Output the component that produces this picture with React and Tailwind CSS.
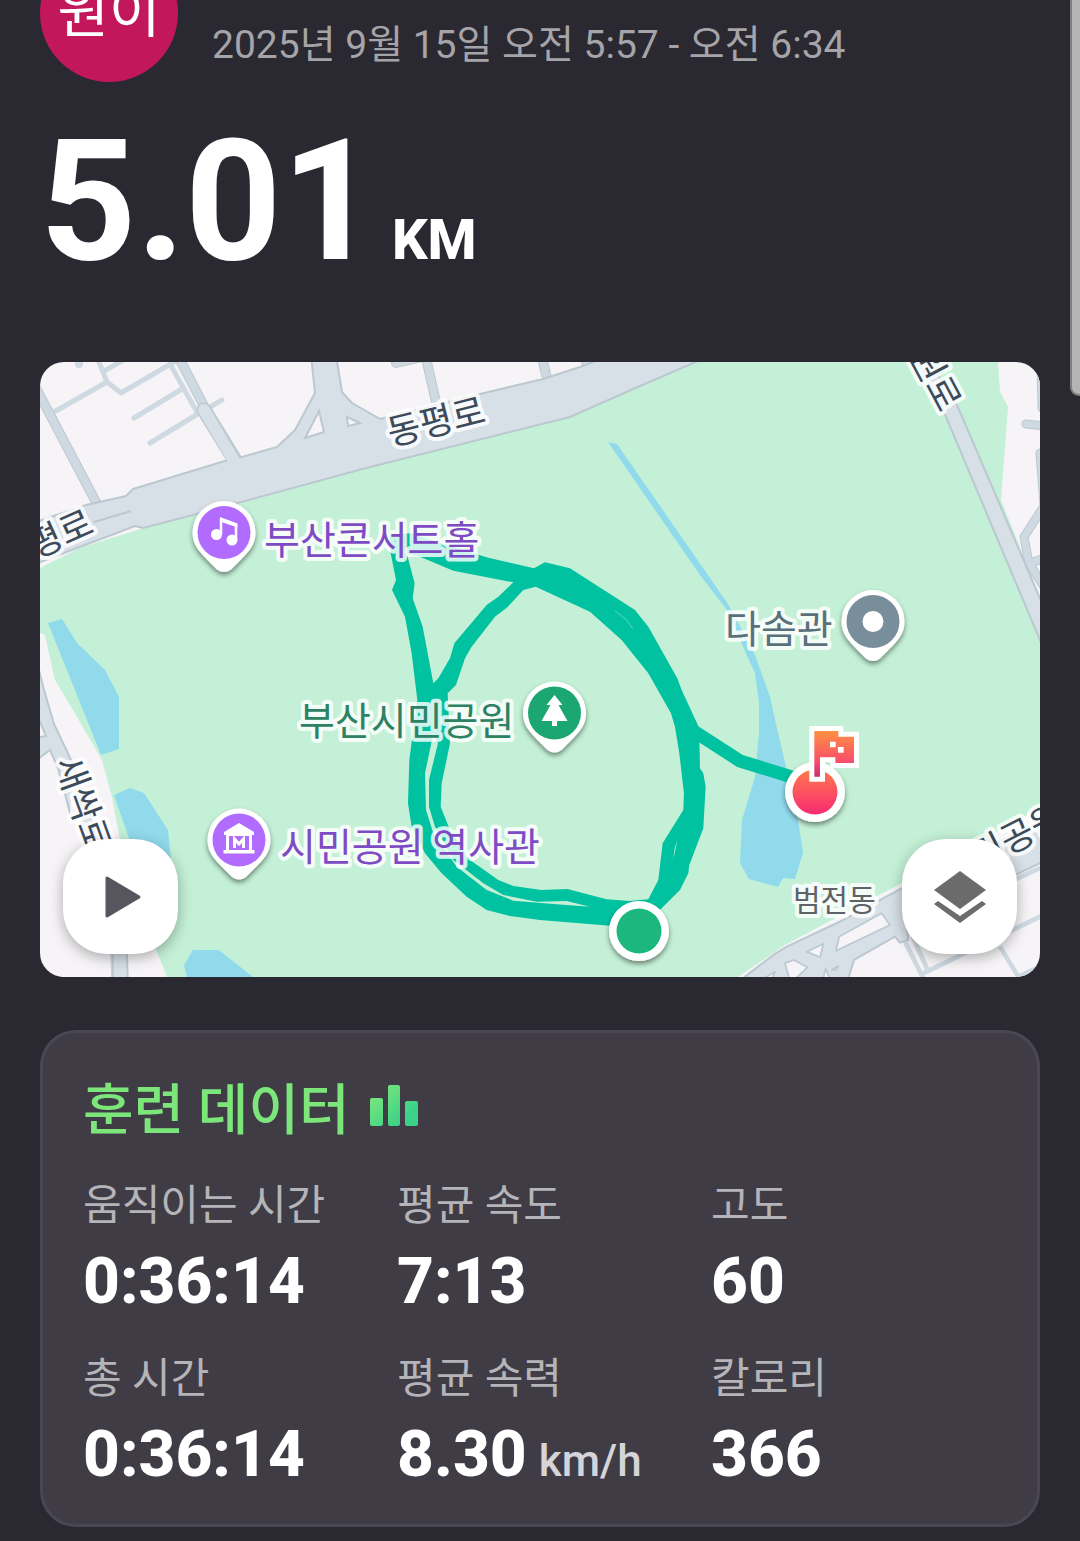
import { useState } from 'react';

const stats = [
  { label: '움직이는 시간', value: '0:36:14' },
  { label: '평균 속도', value: '7:13' },
  { label: '고도', value: '60' },
  { label: '총 시간', value: '0:36:14' },
  { label: '평균 속력', value: '8.30', unit: 'km/h' },
  { label: '칼로리', value: '366' },
];

const HALO = '[paint-order:stroke] stroke-white/80 stroke-[8px] [stroke-linejoin:round]';

function Pin({ x, y, color, children }) {
  return (
    <g transform={`translate(${x} ${y})`}>
      <path
        d="M-31.5 0A31.5 31.5 0 1 1 31.5 0C31.5 12 25 19 17 27L7 37Q0 42-7 37L-17 27C-25 19-31.5 12-31.5 0Z"
        fill="#fff"
        filter="url(#pin-shadow)"
      />
      <circle r="26.5" fill={color} />
      {children}
    </g>
  );
}

function Roads() {
  return (
    <g>
      {/* side streets, upper left */}
      <g fill="none" stroke="#ced9e1" strokeWidth="5" strokeLinecap="round" strokeLinejoin="round">
        <path d="M54 412L107 382M99 362L107 382L121 393L174 362M104 371L122 361M134 418L182 389M170 364L198 414L222 400M150 443L196 415" />
      </g>
      <g fill="none" stroke="#bcc8d0" strokeWidth="10">
        <path d="M36 388L97 504M178 356L204 406M426 358L436 402M542 358L548 382M585 358L589 372" />
        <path d="M396 363L422 357" strokeLinecap="round" />
      </g>
      <g fill="none" stroke="#ced9e1" strokeWidth="8">
        <path d="M36 388L97 504M178 356L204 406M426 358L436 402M542 358L548 382M585 358L589 372" />
        <path d="M79 360L79 364M396 363L422 357" strokeLinecap="round" />
      </g>
      <path d="M204 410L236 462" fill="none" stroke="#bcc8d0" strokeWidth="15" strokeLinecap="round" />

      {/* main road */}
      <path
        d="M30 524L86 505L126 496L133 489L228 460L242 457L277 447L295 430L315 393L311 355L336 355L342 392L352 403L380 419L480 394L543 379L583 366L610 355L712 355L640 386L570 417L370 467L193 515L143 528L135 526L30 566Z"
        fill="#d7dfe7"
        stroke="#bcc8d0"
        strokeWidth="2"
        strokeLinejoin="round"
      />
      <path d="M204 410L236 464" fill="none" stroke="#d7dfe7" strokeWidth="12" strokeLinecap="round" />
      <path d="M94 522L131 511" stroke="#bcc8d0" strokeWidth="2" />
      <path d="M319 411L324 432L305 438ZM347 417L360 423L348 426Z" fill="#f6f4f6" stroke="#bcc8d0" strokeWidth="2" />

      {/* right side */}
      <g fill="none" strokeLinecap="round" strokeLinejoin="round">
        <path d="M1041 362L1042 408M1026 424L1046 426M1040 453L1044 506L1024 537L1029 563L1046 590M1034 562L1046 557" stroke="#bcc8d0" strokeWidth="9" />
        <path d="M1041 362L1042 408M1026 424L1046 426M1040 453L1044 506L1024 537L1029 563L1046 590M1034 562L1046 557" stroke="#ced9e1" strokeWidth="7" />
      </g>
      <path d="M925 355L957 405L1000 505L1050 622L1050 664L944 412L915 355Z" fill="#d7dfe7" stroke="#bcc8d0" strokeWidth="2" />

      {/* left side */}
      <path d="M34 650L44 690L54 724L72 762L92 820L122 977L112 977L80 850L58 768L50 750L34 762L34 738L46 736L34 708Z" fill="#d7dfe7" stroke="#bcc8d0" strokeWidth="2" />
      <path d="M72 780L108 930L112 985L60 985Z" fill="#f6f4f6" />
      <path d="M112 930L113 985L128 985L126 930Z" fill="#d7dfe7" stroke="#bcc8d0" strokeWidth="2" />

      {/* junction, lower right */}
      <g transform="translate(690 660) scale(0.3333)" strokeLinejoin="round">
        <path
          d="M165 950L250 885L290 860L460 780L635 685L1060 480L1060 605L650 800L655 840L630 848L615 830L492 900L472 965L150 965Z"
          fill="#d7dfe7"
          stroke="#bcc8d0"
          strokeWidth="6"
        />
        <path
          d="M448 830L575 760L600 795L438 872ZM350 875L400 852L390 892ZM285 910L312 900L352 922L318 955L298 955ZM222 955L255 935L245 955ZM400 955L407 925L418 955ZM425 930L445 918L440 930Z"
          fill="#f6f4f6"
          stroke="#bcc8d0"
          strokeWidth="5"
        />
        <path d="M645 845L700 955M668 830L715 935M690 945L1060 765M930 860L985 950L1060 915M960 665L1060 620" fill="none" stroke="#ced9e1" strokeWidth="14" />
      </g>
    </g>
  );
}

function Route() {
  return (
    <g fill="#00c2a0">
      <g transform="translate(370 520) scale(0.3333)">
        <path
          fillRule="evenodd"
          d="M60 45L62 100L78 180L66 210L105 290L125 400L142 540L118 720L114 850L125 920L165 1000L215 1060L290 1130L350 1170L420 1188L510 1200L720 1217L806 1230L875 1165L930 1110L955 1060L958 1035L1000 925L1007 800L1000 760L990 745L988 640L985 618L935 510L922 475L835 320L795 270L600 145L525 127L492 145L355 113L230 75L120 40Z
            M110 100L134 190L128 235L158 320L190 490L205 475L240 415L253 370L350 255L385 230L430 187L250 152L150 110Z
            M497 200L460 210L412 262L375 290L305 380L285 415L258 495L233 520L240 670L215 790L212 860L240 930L300 1020L385 1080L430 1098L515 1110L592 1107L710 1138L780 1143L835 1138L865 1080L878 970L940 870L942 820L928 700L915 620L903 580L835 460L755 360L660 275Z
            M190 640L165 760L168 870L190 940L260 1040L350 1110L430 1142L560 1153L660 1160L590 1143L500 1145L400 1125L340 1090L250 1020L195 920L177 860L177 780L204 670Z
            M922 962L914 985L910 1020L915 995Z"
        />
        <path d="M735 272L770 300L788 326" fill="none" stroke="#5fd6b8" strokeWidth="3" />
      </g>
      <path d="M692 730L740 761L795 778" fill="none" stroke="#00c2a0" strokeWidth="13" />
    </g>
  );
}

function Labels() {
  return (
    <g fontFamily="'Noto Sans CJK KR', sans-serif">
      <g className={HALO} fontSize="36" fill="#3c4a5a">
        <text transform="translate(391 446) rotate(-14)">동평로</text>
        <text transform="translate(96 532) rotate(-24)" textAnchor="end">동평로</text>
        <text transform="translate(54 762) rotate(70)">새싹로</text>
        <text transform="translate(940 414) rotate(62)" textAnchor="end">공원로</text>
        <text transform="translate(979 870) rotate(-27)">민공원로</text>
      </g>
      <g className={HALO} fontSize="39">
        <text x="264" y="554" fill="#7f4bc4">부산콘서트홀</text>
        <text x="280" y="861" fill="#7f4bc4">시민공원 역사관</text>
        <text x="299" y="735" fill="#2c8263">부산시민공원</text>
        <text x="725" y="643" fill="#5a717c">다솜관</text>
      </g>
      <text className={HALO} x="793" y="911" fontSize="30" fill="#5f6368">범전동</text>
    </g>
  );
}

function RunMap() {
  return (
    <svg viewBox="40 362 1000 615" className="block w-full" role="img" aria-label="달리기 경로">
      <defs>
        <filter id="pin-shadow" x="-30%" y="-30%" width="160%" height="160%">
          <feDropShadow dx="0" dy="3" stdDeviation="2.5" floodColor="#000" floodOpacity="0.45" />
        </filter>
        <linearGradient id="finish" x1="0" y1="0" x2="0" y2="1">
          <stop offset="0" stopColor="#ff7a4a" />
          <stop offset="1" stopColor="#f92a74" />
        </linearGradient>
        <linearGradient id="flag" x1="0" y1="0" x2="0" y2="1">
          <stop offset="0" stopColor="#ff9142" />
          <stop offset="0.65" stopColor="#f9506a" />
          <stop offset="1" stopColor="#c92d77" />
        </linearGradient>
      </defs>

      <rect x="40" y="362" width="1000" height="615" fill="#f6f4f6" />
      <path
        d="M40 568L80 548L137 530L193 515L370 467L570 417L697 362L998 362L1000 392L1008 407L1001 500L1040 597L1040 808L902 883L877 896L785 945L738 977L167 977L157 952L120 840L112 797L102 760L73 710L55 680L45 635L40 633Z"
        fill="#c3f0d6"
      />
      <g fill="#90daec">
        <path d="M608 442L617 444L728 604L755 655L770 697L778 733L797 813L803 853L795 879L783 878L778 887L749 879L740 863L742 820L755 777L759 733L759 703L755 673L748 658L727 610L700 575Z" />
        <path d="M48 623L62 619L77 643L105 670L119 697L119 749L101 755Z" />
        <path d="M114 795L130 788L144 793L168 830L171 860L140 870Z" />
        <path d="M187 977L184 965L193 950L219 950L253 977Z" />
      </g>

      <Roads />
      <Route />
      <Labels />

      <Pin x={224} y={532.5} color="#b16cff">
        <path d="M-4-15.500L13.500-9V-5L-4-11Z" fill="#fff" />
        <path d="M-3-14V2M12-8V7" stroke="#fff" strokeWidth="2.500" />
        <circle cx="-7.500" cy="2" r="5.500" fill="#fff" />
        <circle cx="8" cy="7.500" r="5.500" fill="#fff" />
      </Pin>
      <Pin x={239} y={840} color="#b16cff">
        <path d="M0-17L15-8V-5H-15V-8ZM-13-5H13V10H15.500V13.500H-15.500V10H-13Z" fill="#fff" />
        <path d="M-10-4H10V10H-10Z" fill="#b16cff" />
        <path d="M-4.500 8V-1L0 4L4.500-1V8" fill="none" stroke="#fff" strokeWidth="3" />
      </Pin>
      <Pin x={554.5} y={713} color="#1ba672">
        <path d="M0-18L8-8H4L13 8H2.500V13H-2.500V8H-13L-4-8H-8Z" fill="#fff" />
      </Pin>
      <Pin x={873} y={621.5} color="#788f9b">
        <circle r="10.500" fill="#fff" />
      </Pin>

      <circle cx="639" cy="931" r="30" fill="#fff" filter="url(#pin-shadow)" />
      <circle cx="639" cy="931" r="22.500" fill="#1bb77e" />

      <circle cx="815" cy="792" r="30" fill="#fff" filter="url(#pin-shadow)" />
      <circle cx="815" cy="792" r="22.500" fill="url(#finish)" />
      <g transform="translate(690 660) scale(0.3333)">
        <path d="M373 213H445V230H492V309H436V292H390V350H373Z" fill="#fff" stroke="#fff" strokeWidth="30" />
        <path d="M373 213H445V230H492V309H436V292H390V350H373Z" fill="url(#flag)" />
        <path d="M420 245h17v17h-17zM444 261h17v17h-17z" fill="#fff" />
      </g>
    </svg>
  );
}

function MapButton({ label, className, onClick, children }) {
  return (
    <button
      type="button"
      aria-label={label}
      onClick={onClick}
      className={`absolute bottom-[23px] flex size-[115px] items-center justify-center rounded-[44px] bg-white shadow-[0_4px_14px_rgba(0,0,0,0.3)] ${className}`}
    >
      {children}
    </button>
  );
}

export default function App() {
  const [playing, setPlaying] = useState(false);

  return (
    <div className="relative overflow-hidden bg-[#2a2831] px-10 pb-[14px] font-['Roboto','Noto_Sans_CJK_KR',sans-serif] text-white">
      <div className="absolute top-0 -right-2 h-[396px] w-[18px] rounded-b-xl border-2 border-t-0 border-[#7f7f80] bg-[#b4b4b5]" />

      <header className="-mt-14 flex items-end gap-[34px]">
        <div className="flex size-[138px] shrink-0 items-center justify-center rounded-full bg-[#c2185b] text-[56px] leading-none">
          원이
        </div>
        <p className="pb-3 text-[39px] leading-[50px] text-[#a5a4a8]">2025년 9월 15일 오전 5:57 - 오전 6:34</p>
      </header>

      <h1 className="mt-9 flex items-baseline gap-[14px] text-[168px] leading-[168px] font-bold">
        5.01
        <span className="text-[56px] leading-none font-extrabold">KM</span>
      </h1>

      <section className="relative mt-[76px] overflow-hidden rounded-3xl">
        <RunMap />
        <MapButton label="재생" className="left-[23px]" onClick={() => setPlaying(!playing)}>
          <svg viewBox="0 0 48 48" className="ml-1 size-12">
            <path d="M8 5L40 24L8 43Z" fill="#57555e" stroke="#57555e" strokeWidth="3" strokeLinejoin="round" />
          </svg>
        </MapButton>
        <MapButton label="지도 레이어" className="right-[23px]">
          <svg viewBox="0 0 52 52" className="size-[52px]" fill="#6b6b6b">
            <path d="M26 0L52 19L26 38L0 19Z" />
            <path d="M0 33L4 30L26 45L48 30L52 33L26 52Z" />
          </svg>
        </MapButton>
      </section>

      <section className="mt-[53px] rounded-[36px] border-[3px] border-[#494751] bg-[#3f3c46] pt-[39px] pr-3 pb-[25px] pl-10">
        <div className="flex items-start gap-5">
          <h2 className="text-[55px] leading-[76px] font-medium text-[#7ce67b]">훈련 데이터</h2>
          <svg viewBox="0 0 48 41" className="mt-[13px] h-[41px] w-12">
            <defs>
              <linearGradient id="bars" gradientUnits="userSpaceOnUse" x1="5" y1="5" x2="34" y2="34">
                <stop offset="0" stopColor="#7ce67b" />
                <stop offset="1" stopColor="#3bd188" />
              </linearGradient>
            </defs>
            <g fill="url(#bars)">
              <rect y="13" width="13" height="28" rx="2" />
              <rect x="18" width="12" height="41" rx="2" />
              <rect x="35" y="16" width="13" height="25" rx="2" />
            </g>
          </svg>
        </div>
        <dl className="mt-[26px] grid grid-cols-3 gap-y-[21px]">
          {stats.map(stat => (
            <div key={stat.label}>
              <dt className="text-[42px] leading-[64px] text-[#b5b4b9]">{stat.label}</dt>
              <dd className="text-[64px] leading-[88px] font-extrabold">
                {stat.value}
                {stat.unit && <span className="ml-3 text-[44px] leading-none font-medium text-[#d5d4d9]">{stat.unit}</span>}
              </dd>
            </div>
          ))}
        </dl>
      </section>
    </div>
  );
}
